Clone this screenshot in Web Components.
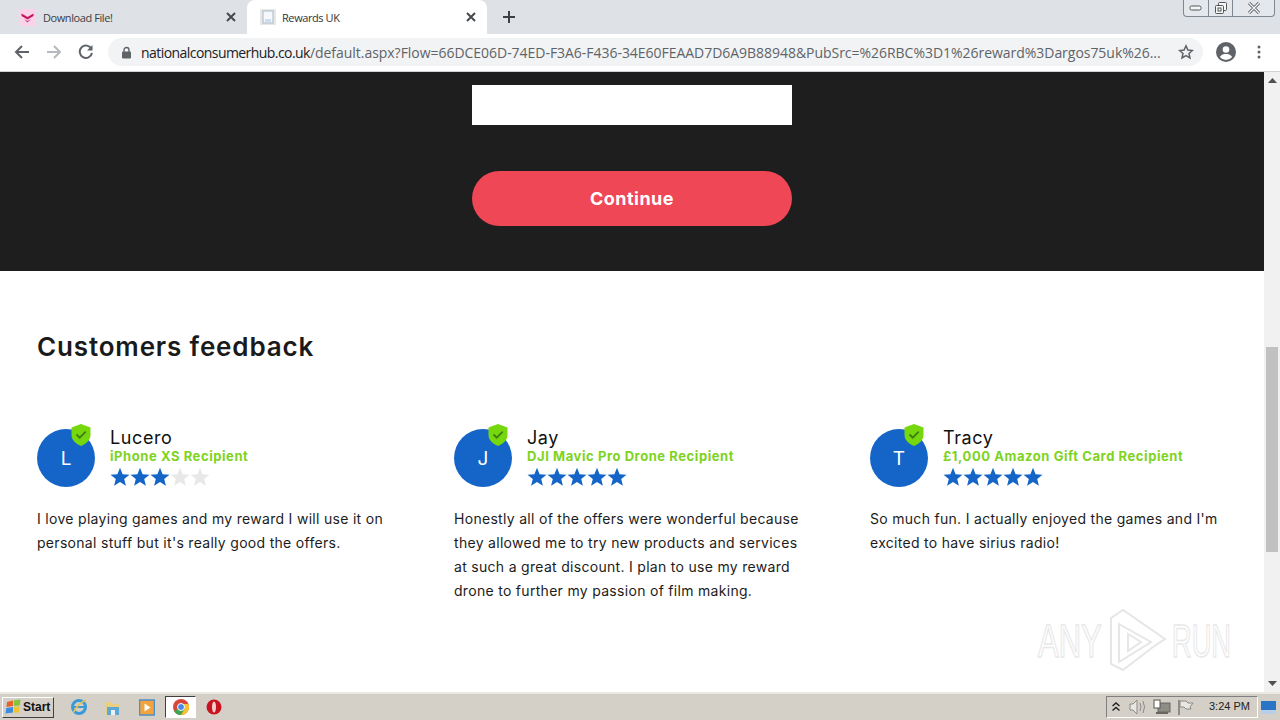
<!DOCTYPE html>
<html>
<head>
<meta charset="utf-8">
<title>Rewards UK</title>
<style>
html,body{margin:0;padding:0;width:1280px;height:720px;overflow:hidden;background:#fff}
body{display:flex;flex-direction:column;font-family:"Liberation Sans",sans-serif}
</style>
</head>
<body>
<browser-tabs></browser-tabs>
<browser-toolbar></browser-toolbar>
<page-view>
  <offer-panel></offer-panel>
  <feedback-section>
    <review-card initial="L" name="Lucero" prize="iPhone XS Recipient" rating="3">I love playing games and my reward I will use it on personal stuff but it's really good the offers.</review-card>
    <review-card initial="J" name="Jay" prize="DJI Mavic Pro Drone Recipient" rating="5">Honestly all of the offers were wonderful because they allowed me to try new products and services at such a great discount. I plan to use my reward drone to further my passion of film making.</review-card>
    <review-card initial="T" name="Tracy" prize="£1,000 Amazon Gift Card Recipient" rating="5">So much fun. I actually enjoyed the games and I'm excited to have sirius radio!</review-card>
  </feedback-section>
</page-view>
<task-bar></task-bar>
<script>
class BrowserTabs extends HTMLElement{
constructor(){
  super();
  this.attachShadow({mode:'open'}).innerHTML=`<style>
:host{display:flex;height:34px;background:#dee1e6;font:11px "Open Sans","Liberation Sans",sans-serif;color:#3c4043;position:relative;flex:none}
.tab{width:240px;box-sizing:border-box;display:flex;align-items:center;padding:0 8px 0 19px;gap:7px;height:34px}
.tab.first{width:247px}
.tab.on{background:#fff;border-radius:8px 8px 0 0;color:#333;padding-left:13px;gap:6px}
.tab span{flex:1;white-space:nowrap;letter-spacing:-.42px}
.x{width:16px;height:16px}
.plus{width:16px;height:16px;margin:9px 0 0 14px}
.win{position:absolute;right:5px;top:0;display:flex;height:16px;border:1px solid #7f8790;border-top:0;border-radius:0 0 4px 4px;background:#e4e7ec}
.win div{display:flex;align-items:center;justify-content:center;border-left:1px solid #7f8790}
.win div:first-child{border-left:0}
</style>
<div class="tab first">
  <svg width="17" height="17" viewBox="0 0 17 17"><rect width="17" height="17" fill="#fbd3e8"/><path d="M2.500 4.500l6 3.500 6-3.500V7l-6 3.500-6-3.500z" fill="#c2185b"/><path d="M5 10l3.500 2 3.500-2-3.500 3.500z" fill="#d0337a"/></svg>
  <span>Download File!</span>
  <svg class="x" viewBox="0 0 16 16"><path d="M4 4l8 8M12 4l-8 8" stroke="#45494e" stroke-width="2"/></svg>
</div>
<div class="tab on">
  <svg width="16" height="16" viewBox="0 0 16 16"><rect width="16" height="16" fill="#e8e8e8"/><rect x="3" y="2" width="10" height="12" fill="#f5f8fc" stroke="#a9b6c6"/><path d="M5 10h6v3H5z" fill="#cfdcec"/></svg>
  <span>Rewards UK</span>
  <svg class="x" viewBox="0 0 16 16"><path d="M4 4l8 8M12 4l-8 8" stroke="#45494e" stroke-width="2"/></svg>
</div>
<svg class="plus" viewBox="0 0 16 16"><path d="M8 2v12M2 8h12" stroke="#3c4043" stroke-width="2"/></svg>
<div class="win">
  <div style="width:24px"><svg width="14" height="8" viewBox="0 0 14 8"><rect x="1" y="2" width="11" height="4" rx="1.500" fill="#f4f6f8" stroke="#555"/></svg></div>
  <div style="width:23px"><svg width="14" height="14" viewBox="0 0 14 14" fill="#f4f6f8" stroke="#555"><rect x="4.500" y="1.500" width="8" height="8" rx="1"/><rect x="1.500" y="4.500" width="8" height="8" rx="1"/><rect x="4" y="7" width="3" height="3"/></svg></div>
  <div style="width:41px"><svg width="14" height="12" viewBox="0 0 14 12"><path d="M2 1l10 10M12 1L2 11" stroke="#555" stroke-width="3"/><path d="M2 1l10 10M12 1L2 11" stroke="#f4f6f8" stroke-width="1.400"/></svg></div>
</div>`;
}
}
customElements.define('browser-tabs',BrowserTabs);

class BrowserToolbar extends HTMLElement{
constructor(){
  super();
  this.attachShadow({mode:'open'}).innerHTML=`<style>
:host{display:flex;align-items:center;height:36px;background:#fff;padding:0 13px 1px 14px;border-bottom:1px solid #d0d2d5;flex:none}
.nav{width:16px;height:16px;margin-right:16px}
.omni{width:1095px;height:28px;border-radius:14px;background:#f1f3f4;display:flex;align-items:center;margin:0 0 0 -2px;padding:0 9px 0 13px;box-sizing:border-box;font:14px "Open Sans","Liberation Sans",sans-serif;color:#5f6368;flex:none}
.url{flex:1;white-space:nowrap;overflow:hidden;margin-left:9px;letter-spacing:-.035px}
.url b{font-weight:400;color:#202124;letter-spacing:-.56px}
.star{margin-left:8px;flex:none}
.user{margin-left:13px;flex:none}
.dots{margin-left:21px;flex:none}
</style>
<svg class="nav" viewBox="0 0 16 16"><path d="M15 8H2M8 2L2 8l6 6" fill="none" stroke="#5f6368" stroke-width="2"/></svg>
<svg class="nav" viewBox="0 0 16 16"><path d="M1 8h13M8 2l6 6-6 6" fill="none" stroke="#b6b9bd" stroke-width="2"/></svg>
<svg class="nav" viewBox="0 0 16 16"><path d="M13.500 5A6.200 6.200 0 1 0 14 9" fill="none" stroke="#5f6368" stroke-width="2"/><path d="M14.500 1v5.500H9z" fill="#5f6368"/></svg>
<div class="omni">
  <svg width="11" height="13" viewBox="0 0 11 13" style="flex:none"><path d="M3 6V4a2.500 2.500 0 0 1 5 0v2" fill="none" stroke="#5f6368" stroke-width="1.400"/><rect x="1" y="5.500" width="9" height="7" rx="1" fill="#5f6368"/></svg>
  <div class="url"><b>nationalconsumerhub.co.uk</b>/default.aspx?Flow=66DCE06D-74ED-F3A6-F436-34E60FEAAD7D6A9B88948&amp;PubSrc=%26RBC%3D1%26reward%3Dargos75uk%26...</div>
  <svg class="star" width="16" height="16" viewBox="0 0 16 16"><path d="M8 1.800l1.900 4.200 4.500.5-3.400 3 1 4.500L8 11.700 4 14l1-4.500-3.400-3 4.500-.5z" fill="none" stroke="#5f6368" stroke-width="1.500"/></svg>
</div>
<svg class="user" width="20" height="20" viewBox="0 0 20 20"><circle cx="10" cy="10" r="10" fill="#5f6368"/><circle cx="10" cy="7.500" r="3.300" fill="#fff"/><path d="M3.800 15c1.500-2.500 4-3 6.200-3s4.700.5 6.200 3a8 8 0 0 1-12.400 0z" fill="#fff"/></svg>
<svg class="dots" width="4" height="14" viewBox="0 0 4 14" fill="#5f6368"><circle cx="2" cy="2" r="1.500"/><circle cx="2" cy="7" r="1.500"/><circle cx="2" cy="12" r="1.500"/></svg>`;
}
}
customElements.define('browser-toolbar',BrowserToolbar);

class PageView extends HTMLElement{
constructor(){
  super();
  this.attachShadow({mode:'open'}).innerHTML=`<style>
:host{display:flex;height:620px;flex:none;position:relative}
.content{width:1264px;flex:none;overflow:hidden}
.bar{width:16px;background:#f1f1f1;display:flex;flex-direction:column;justify-content:space-between;position:relative;flex:none}
.arrow{height:17px;display:flex;align-items:center;justify-content:center}
.thumb{position:absolute;left:2px;width:12px;top:275px;height:205px;background:#c1c1c1}
.mark{position:absolute;left:1038px;top:536px;height:64px;display:flex;align-items:center;font:47px "Liberation Sans",sans-serif;color:#fff;-webkit-text-stroke:1.500px #e8e8e8;pointer-events:none}
.mark span{display:block;white-space:nowrap;transform-origin:0 50%}
.any{width:70px;transform:scaleX(.66)}
.run{width:62px;margin-left:5px;transform:scaleX(.58)}
</style>
<div class="content"><slot></slot></div>
<div class="bar">
  <div class="arrow"><svg width="9" height="5" viewBox="0 0 9 5"><path d="M4.500 0L9 5H0z" fill="#505050"/></svg></div>
  <div class="thumb"></div>
  <div class="arrow"><svg width="9" height="5" viewBox="0 0 9 5"><path d="M4.500 5L9 0H0z" fill="#505050"/></svg></div>
</div>
<div class="mark"><span class="any">ANY</span><svg width="59" height="64" viewBox="0 0 59 64" fill="none" stroke="#e6e6e6" stroke-width="2"><path d="M3 10L15 2l42 29-12 8L15 62 3 56z"/><path d="M11 16l32 18-32 20z"/><path d="M20 26l13 8-13 9z"/></svg><span class="run">RUN</span></div>`;
}
}
customElements.define('page-view',PageView);

class OfferPanel extends HTMLElement{
constructor(){
  super();
  this.attachShadow({mode:'open'}).innerHTML=`<style>
:host{display:flex;flex-direction:column;align-items:center;height:199px;box-sizing:border-box;background:#1e1e1e;padding-top:13px}
.field{width:320px;height:40px;background:#fff}
.go{width:320px;height:55px;margin-top:46px;border-radius:28px;background:#ef4755;color:#fff;display:flex;align-items:center;justify-content:center;padding-bottom:1px;box-sizing:border-box;font:700 18px Inter,"Open Sans",sans-serif;letter-spacing:.45px}
</style>
<div class="field"></div>
<div class="go">Continue</div>`;
}
}
customElements.define('offer-panel',OfferPanel);

class FeedbackSection extends HTMLElement{
constructor(){
  super();
  this.attachShadow({mode:'open'}).innerHTML=`<style>
:host{display:block;padding:58px 0 0 37px}
h2{margin:0;font:600 26px/36px Inter,"Open Sans",sans-serif;color:#1a1a1a;letter-spacing:.85px}
.row{display:grid;grid-template-columns:417px 416px 360px;margin-top:64px}
</style>
<h2>Customers feedback</h2>
<div class="row"><slot></slot></div>`;
}
}
customElements.define('feedback-section',FeedbackSection);

class StarRating extends HTMLElement{
connectedCallback(){
  if(this.shadowRoot)return;
  const n=+this.getAttribute('value')||0;
  let stars='';
  for(let i=0;i<5;i++)stars+=`<svg width="20" height="20" viewBox="0 0 20 20"><path d="M10 .8l2.600 6.400 6.900.5-5.300 4.400 1.700 6.700L10 15.100 4.100 18.800l1.700-6.700L.5 7.700l6.900-.5z" fill="${i<n?'#1565c8':'#e8e8e8'}"/></svg>`;
  this.attachShadow({mode:'open'}).innerHTML=`<style>:host{display:flex;height:20px}svg{display:block}</style>${stars}`;
}
}
customElements.define('star-rating',StarRating);

class ReviewCard extends HTMLElement{
connectedCallback(){
  if(this.shadowRoot)return;
  const a=k=>this.getAttribute(k);
  this.attachShadow({mode:'open'}).innerHTML=`<style>
:host{display:block;font-family:Inter,"Open Sans",sans-serif}
.head{display:flex;gap:15px;height:58px}
.avatar{width:58px;height:58px;border-radius:50%;background:#1565c8;color:#fff;display:flex;align-items:center;justify-content:center;font-size:19px;position:relative;flex:none}
.shield{position:absolute;left:34px;top:-5px}
.name{font-size:18px;line-height:18px;color:#111;letter-spacing:.6px}
.prize{font-size:13px;font-weight:700;line-height:18px;color:#7ed321;letter-spacing:.57px;white-space:nowrap}
star-rating{margin:2px 0 0}
p{margin:20px 0 0;font-size:14px;line-height:24px;color:#1c1c1c;width:355px;letter-spacing:.3px}
</style>
<div class="head">
  <div class="avatar">${a('initial')}
    <svg class="shield" width="20" height="22" viewBox="0 0 20 22"><path d="M10 0l9.500 3.500V11c0 5-4 8.500-9.500 11C4.500 19.500.5 16 .5 11V3.500z" fill="#76d80c"/><path d="M5.500 10.500l3.200 3.200 6-6" fill="none" stroke="#3c7d18" stroke-width="1.800"/></svg>
  </div>
  <div>
    <div class="name">${a('name')}</div>
    <div class="prize">${a('prize')}</div>
    <star-rating value="${a('rating')}"></star-rating>
  </div>
</div>
<p><slot></slot></p>`;
}
}
customElements.define('review-card',ReviewCard);

class TaskBar extends HTMLElement{
constructor(){
  super();
  this.attachShadow({mode:'open'}).innerHTML=`<style>
:host{display:flex;align-items:center;height:28px;box-sizing:border-box;background:#d4d0c8;border-top:2px solid #ece9e2;flex:none;position:relative;padding-left:2px}
.start{width:52px;height:21px;display:flex;align-items:center;gap:1px;box-sizing:border-box;border:1px solid;border-color:#fff #404040 #404040 #fff;font:700 12px "Liberation Sans",sans-serif;color:#111;padding-left:2px}
.icons{display:flex;align-items:center;margin-left:16px;gap:17px}
.icons svg{display:block;flex:none}
.media{margin-left:1px}
.chrome{width:31px;height:22px;margin:0 -7px;background:#fff;box-sizing:border-box;border:1px solid;border-color:#404040 #fff #fff #404040;display:flex;align-items:center;justify-content:center}
.tray{margin-left:auto;width:152px;height:22px;box-sizing:border-box;border:1px solid;border-color:#808080 #fff #fff #808080;position:relative;font:11px "Liberation Sans",sans-serif;color:#222;flex:none}
.tray>*{position:absolute}
.desk{margin:0 4px 0 3px;flex:none}
</style>
<div class="start">
  <svg width="17" height="16" viewBox="0 0 17 16"><path d="M2 3l6-1.500V7L1.500 8z" fill="#e8622a"/><path d="M9 1.200l6.500-.7-.7 6L9 7z" fill="#86c23a"/><path d="M1.300 9L8 8v5.500L.5 14.500z" fill="#3a8de0"/><path d="M9 8l5.700-.4-.7 6L9 13.500z" fill="#f0c330"/></svg>
  <span>Start</span>
</div>
<div class="icons">
  <svg width="18" height="18" viewBox="0 0 18 18"><circle cx="9" cy="9" r="6.500" fill="none" stroke="#3a9ad9" stroke-width="3"/><path d="M3 9h12" stroke="#3a9ad9" stroke-width="2"/><path d="M3 15C6 9 11 4 16 2" fill="none" stroke="#e8c14a" stroke-width="1.500"/></svg>
  <svg width="16" height="17" viewBox="0 0 16 17"><path d="M1 3h5l1 2h8v11H1z" fill="#e9cf7f"/><path d="M2 8h12v8H2z" fill="#5fa8d3"/><path d="M6 11h4v5H6z" fill="#e8f2f8"/></svg>
  <svg class="media" width="16" height="17" viewBox="0 0 16 17"><rect x=".5" y="1" width="15" height="15" fill="#f3a33c" stroke="#4d8fc9" stroke-width="1.500"/><path d="M5.500 4.500v8l6-4z" fill="#fff"/></svg>
  <div class="chrome"><svg width="16" height="16" viewBox="0 0 16 16"><circle cx="8" cy="8" r="8" fill="#d8453a"/><path d="M8 8L1 12a8 8 0 0 0 7 4l3.500-5z" fill="#3da64f"/><path d="M8 5h7.500A8 8 0 0 1 8 16l3.500-6z" fill="#f6c52e"/><circle cx="8" cy="8" r="3.500" fill="#4a88e8" stroke="#fff"/></svg></div>
  <svg width="16" height="16" viewBox="0 0 16 16"><circle cx="8" cy="8" r="7.500" fill="#c8141e"/><ellipse cx="8" cy="8" rx="2" ry="5.500" fill="#f2d0d0"/></svg>
</div>
<div class="tray">
  <svg style="left:4px;top:4px" width="10" height="11" viewBox="0 0 10 11"><path d="M1.500 5L5 2l3.500 3M1.500 9.500L5 6.500l3.500 3" fill="none" stroke="#222" stroke-width="1.400"/></svg>
  <svg style="left:22px;top:2px" width="18" height="16" viewBox="0 0 18 16"><path d="M1 5h3l4-4v14l-4-4H1z" fill="#e9e7e1" stroke="#8a8a8a"/><path d="M11 4q2 4 0 8M14 2q3 6 0 12" fill="none" stroke="#8a8a8a"/></svg>
  <svg style="left:46px;top:2px" width="18" height="16" viewBox="0 0 18 16"><rect x="5" y="4" width="12" height="9" fill="#8d8d86" stroke="#66665f"/><rect x="1" y="1" width="6" height="8" fill="#fff" stroke="#55554f"/><path d="M3 14h12" stroke="#66665f" stroke-width="2"/></svg>
  <svg style="left:70px;top:2px" width="18" height="16" viewBox="0 0 18 16"><path d="M2 1v15" stroke="#77776f" stroke-width="1.500"/><path d="M3 2h6l2 2h5l-3 4 1 2H9L7 8H3z" fill="#e9e7e1" stroke="#8a8a8a"/></svg>
  <span style="left:102px;top:3px">3:24 PM</span>
</div>
<svg class="desk" width="15" height="13" viewBox="0 0 15 13"><rect width="15" height="13" fill="#2a74c6"/><rect y="9" width="15" height="4" fill="#b9cfe6"/></svg>`;
}
}
customElements.define('task-bar',TaskBar);
</script>
</body>
</html>
